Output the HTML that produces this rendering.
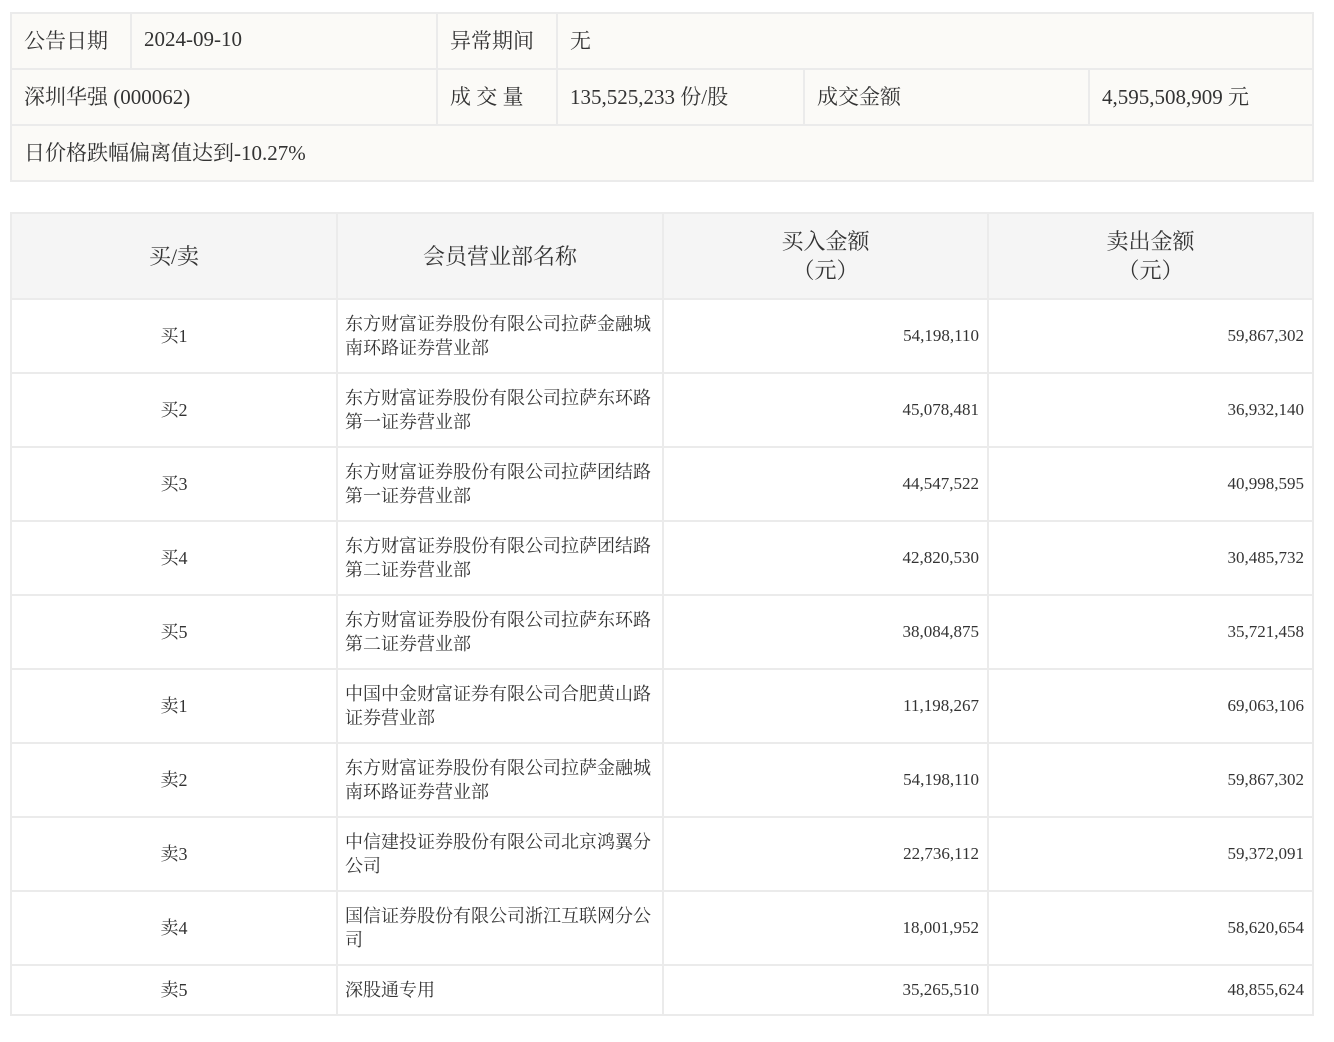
<!DOCTYPE html>
<html><head><meta charset="utf-8"><style>
body{margin:0;background:#fff;width:1334px;height:1042px;position:relative;font-family:"Liberation Serif","Noto Serif CJK SC",serif;color:#333;}
.c{position:absolute;box-sizing:border-box;border:2px solid #ebebeb;display:flex;align-items:center;}
.t{background:#fbfaf7;font-size:21px;padding-left:12px;padding-bottom:2px;}
.h{background:#f5f5f5;font-size:22px;justify-content:center;text-align:center;line-height:29px;}
.b{font-size:17px;line-height:24px;}
.ctr{justify-content:center;font-size:18px;}
.r{justify-content:flex-end;padding-right:8px;}
.l{padding-left:7px;padding-right:4px;font-size:18px;}
</style></head><body>
<div class="c t" style="left:10px;top:12px;width:122px;height:58px">公告日期</div>
<div class="c t" style="left:130px;top:12px;width:308px;height:58px;padding-bottom:4px">2024-09-10</div>
<div class="c t" style="left:436px;top:12px;width:122px;height:58px">异常期间</div>
<div class="c t" style="left:556px;top:12px;width:758px;height:58px">无</div>
<div class="c t" style="left:10px;top:68px;width:428px;height:58px">深圳华强 (000062)</div>
<div class="c t" style="left:436px;top:68px;width:122px;height:58px">成 交 量</div>
<div class="c t" style="left:556px;top:68px;width:249px;height:58px">135,525,233 份/股</div>
<div class="c t" style="left:803px;top:68px;width:287px;height:58px">成交金额</div>
<div class="c t" style="left:1088px;top:68px;width:226px;height:58px">4,595,508,909 元</div>
<div class="c t" style="left:10px;top:124px;width:1304px;height:58px">日价格跌幅偏离值达到-10.27%</div>

<div class="c h" style="left:10px;top:212px;width:328px;height:88px">买/卖</div>
<div class="c h" style="left:336px;top:212px;width:328px;height:88px">会员营业部名称</div>
<div class="c h" style="left:662px;top:212px;width:327px;height:88px">买入金额<br>（元）</div>
<div class="c h" style="left:987px;top:212px;width:327px;height:88px">卖出金额<br>（元）</div>

<div id="rows"></div>
<script>
var d=[["买1","东方财富证券股份有限公司拉萨金融城<br>南环路证券营业部","54,198,110","59,867,302"],
["买2","东方财富证券股份有限公司拉萨东环路<br>第一证券营业部","45,078,481","36,932,140"],
["买3","东方财富证券股份有限公司拉萨团结路<br>第一证券营业部","44,547,522","40,998,595"],
["买4","东方财富证券股份有限公司拉萨团结路<br>第二证券营业部","42,820,530","30,485,732"],
["买5","东方财富证券股份有限公司拉萨东环路<br>第二证券营业部","38,084,875","35,721,458"],
["卖1","中国中金财富证券有限公司合肥黄山路<br>证券营业部","11,198,267","69,063,106"],
["卖2","东方财富证券股份有限公司拉萨金融城<br>南环路证券营业部","54,198,110","59,867,302"],
["卖3","中信建投证券股份有限公司北京鸿翼分<br>公司","22,736,112","59,372,091"],
["卖4","国信证券股份有限公司浙江互联网分公<br>司","18,001,952","58,620,654"],
["卖5","深股通专用","35,265,510","48,855,624"]];
var h="",y=298;
d.forEach(function(r,i){var ht=i==9?50:74;
h+='<div class="c b ctr" style="left:10px;top:'+y+'px;width:328px;height:'+(ht+2)+'px">'+r[0]+'</div>';
h+='<div class="c b l" style="left:336px;top:'+y+'px;width:328px;height:'+(ht+2)+'px">'+r[1]+'</div>';
h+='<div class="c b r" style="left:662px;top:'+y+'px;width:327px;height:'+(ht+2)+'px">'+r[2]+'</div>';
h+='<div class="c b r" style="left:987px;top:'+y+'px;width:327px;height:'+(ht+2)+'px">'+r[3]+'</div>';
y+=ht;});
document.getElementById("rows").innerHTML=h;
</script>
</body></html>
